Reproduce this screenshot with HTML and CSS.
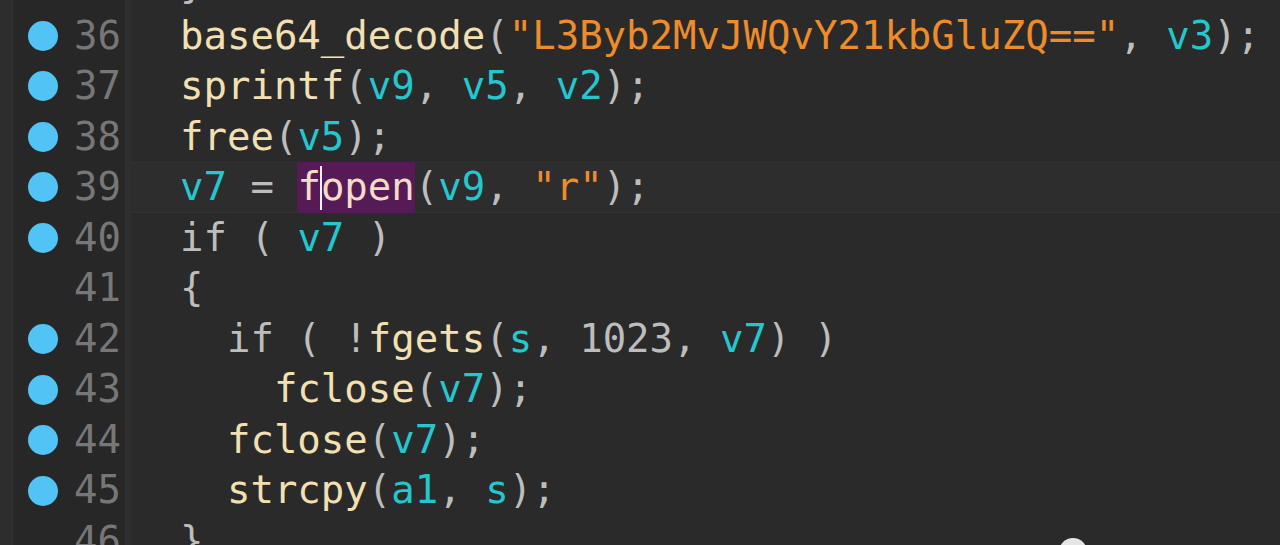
FILE: index.html
```html
<!DOCTYPE html>
<html>
<head>
<meta charset="utf-8">
<link rel="stylesheet" href="styles.css">
</head>
<body>
<div class="editor">
  <div class="edge"></div>
  <div class="gutter">
    <div class="gl"><span class="nodot"></span><span class="num">35</span></div>
    <div class="gl"><span class="dot"></span><span class="num">36</span></div>
    <div class="gl"><span class="dot"></span><span class="num">37</span></div>
    <div class="gl"><span class="dot"></span><span class="num">38</span></div>
    <div class="gl"><span class="dot"></span><span class="num">39</span></div>
    <div class="gl"><span class="dot"></span><span class="num">40</span></div>
    <div class="gl"><span class="nodot"></span><span class="num">41</span></div>
    <div class="gl"><span class="dot"></span><span class="num">42</span></div>
    <div class="gl"><span class="dot"></span><span class="num">43</span></div>
    <div class="gl"><span class="dot"></span><span class="num">44</span></div>
    <div class="gl"><span class="dot"></span><span class="num">45</span></div>
    <div class="gl"><span class="nodot"></span><span class="num">46</span></div>
  </div>
  <div class="code">
    <div class="ln"><span class="p">  }</span></div>
    <div class="ln">  <span class="fn">base64_decode</span><span class="p">(</span><span class="str">"L3Byb2MvJWQvY21kbGluZQ=="</span><span class="p">, </span><span class="var">v3</span><span class="p">);</span></div>
    <div class="ln">  <span class="fn">sprintf</span><span class="p">(</span><span class="var">v9</span><span class="p">, </span><span class="var">v5</span><span class="p">, </span><span class="var">v2</span><span class="p">);</span></div>
    <div class="ln">  <span class="fn">free</span><span class="p">(</span><span class="var">v5</span><span class="p">);</span></div>
    <div class="ln current">  <span class="var">v7</span><span class="p"> = </span><span class="hl">f<span class="caret"></span>open</span><span class="p">(</span><span class="var">v9</span><span class="p">, </span><span class="str">"r"</span><span class="p">);</span></div>
    <div class="ln">  <span class="p">if ( </span><span class="var">v7</span><span class="p"> )</span></div>
    <div class="ln">  <span class="p">{</span></div>
    <div class="ln">    <span class="p">if ( !</span><span class="fn">fgets</span><span class="p">(</span><span class="var">s</span><span class="p">, 1023, </span><span class="var">v7</span><span class="p">) )</span></div>
    <div class="ln">      <span class="fn">fclose</span><span class="p">(</span><span class="var">v7</span><span class="p">);</span></div>
    <div class="ln">    <span class="fn">fclose</span><span class="p">(</span><span class="var">v7</span><span class="p">);</span></div>
    <div class="ln">    <span class="fn">strcpy</span><span class="p">(</span><span class="var">a1</span><span class="p">, </span><span class="var">s</span><span class="p">);</span></div>
    <div class="ln">  <span class="p">}</span></div>
  </div>
  <div class="badge"></div>
</div>
</body>
</html>
```

FILE: styles.css
```css
html, body {
  margin: 0;
  padding: 0;
  background: #2b2b2b;
  overflow: hidden;
}

.editor {
  position: relative;
  display: flex;
  width: 1280px;
  height: 545px;
  overflow: hidden;
  font-family: "DejaVu Sans Mono", "Liberation Mono", monospace;
  font-size: 39px;
  line-height: 50.56px;
  background: #2b2b2b;
}

.edge {
  width: 12px;
  flex: none;
  background: #2d2d2d;
  border-right: 1px solid #333333;
}

.gutter {
  width: 112px;
  flex: none;
  background: #272727;
  border-right: 6px solid #2f2f2f;
  margin-top: -40px;
}

.gl {
  display: flex;
  align-items: center;
  height: 50.56px;
}

.dot, .nodot {
  width: 30px;
  height: 30px;
  border-radius: 50%;
  margin-left: 15px;
  flex: none;
}

.dot {
  background: #52c3f5;
}

.num {
  flex: 1;
  text-align: right;
  padding-right: 4px;
  color: #777777;
}

.code {
  flex: 1;
  margin-top: -40px;
  padding-left: 2px;
  background: #2a2a2a;
}

.ln {
  height: 50.56px;
  white-space: pre;
  color: #c0c0c0;
}

.current {
  background: #2d2d2d;
  box-shadow: inset 0 1px 0 #323232, inset 0 -1px 0 #323232;
  margin-left: -2px;
  padding-left: 2px;
}

.fn { color: #f3e0b2; }
.var { color: #26c6cf; }
.str { color: #ee8c2c; }
.p { color: #bdbdbd; }

.hl {
  position: relative;
  display: inline-block;
  vertical-align: top;
  height: 50.56px;
  background: #561b56;
  color: #f4dccb;
}

.caret {
  position: relative;
}

.caret::after {
  content: "";
  position: absolute;
  left: -1px;
  top: 2px;
  width: 2px;
  height: 44px;
  background: #f0f0f0;
}

.badge {
  position: absolute;
  left: 1059px;
  top: 538px;
  width: 28px;
  height: 28px;
  border-radius: 50%;
  background: #e6e6e6;
}
```
